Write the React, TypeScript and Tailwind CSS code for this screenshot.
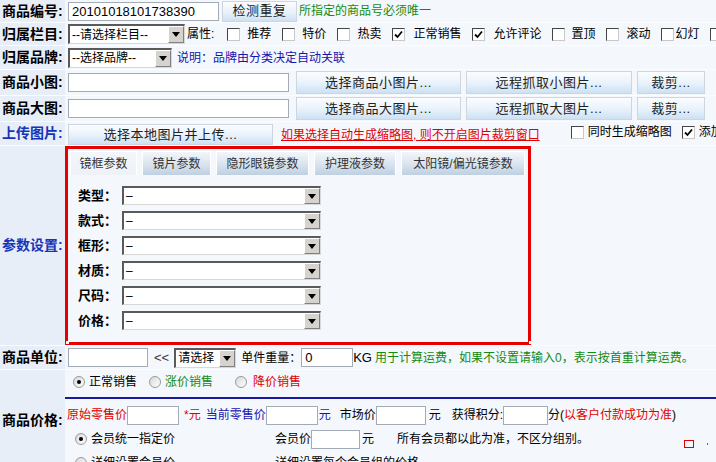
import React from "react";

const FONT = { fontFamily: '"Liberation Sans", "Noto Sans CJK SC", sans-serif' };

const Input = ({ w, value = "", h = 18 }: { w: number; value?: string; h?: number }) => (
  <div
    className="inline-flex items-center shrink-0 bg-white border border-[#a3acb6] px-[3px] text-[13px] text-black leading-none"
    style={{ width: w, height: h }}
  >
    {value}
  </div>
);

const Arrow = () => (
  <div className="flex items-center justify-center w-[16px] h-full bg-[#d6d3ce] border-t border-l border-t-white border-l-white border-b border-r border-b-[#808080] border-r-[#808080] shrink-0">
    <svg width="8" height="5" viewBox="0 0 8 5">
      <path d="M0 0H8L4 5Z" fill="#000" />
    </svg>
  </div>
);

const Select = ({ w, text, h = 19 }: { w: number; text: string; h?: number }) => (
  <div
    className="inline-flex items-stretch shrink-0 bg-white border-t-2 border-l-2 border-t-[#5a5a5a] border-l-[#5a5a5a] border-b border-r border-b-[#d8d8d8] border-r-[#d8d8d8]"
    style={{ width: w, height: h }}
  >
    <span className="flex-1 flex items-center pl-[2px] text-[12px] text-black leading-none">{text}</span>
    <Arrow />
  </div>
);

const Btn = ({ w, children, h = 22 }: { w: number; children: React.ReactNode; h?: number }) => (
  <div
    className="inline-flex items-center justify-center shrink-0 bg-gradient-to-b from-[#fbfdff] via-[#eaf3fb] to-[#cde1f3] border border-[#cbd6e0] text-[13px] text-[#222] tracking-[0.5px]"
    style={{ width: w, height: h }}
  >
    {children}
  </div>
);

const Check = ({ on = false }: { on?: boolean }) => (
  <span className="inline-flex items-center justify-center w-[13px] h-[13px] bg-white border-t border-l border-t-[#444] border-l-[#444] border-b border-r border-b-[#c8c8c8] border-r-[#c8c8c8] shrink-0">
    {on && (
      <svg width="9" height="9" viewBox="0 0 9 9">
        <path d="M1 4.5L3.5 7L8 1.5" stroke="#000" strokeWidth="1.8" fill="none" />
      </svg>
    )}
  </span>
);

const Radio = ({ on = false }: { on?: boolean }) => (
  <span className="inline-flex items-center justify-center w-[12px] h-[12px] rounded-full bg-gradient-to-br from-[#d8d8d8] to-white border border-[#9a9a9a] shrink-0">
    {on && <span className="w-[4px] h-[4px] rounded-full bg-black" />}
  </span>
);

const Label = ({ children, blue = false }: { children: React.ReactNode; blue?: boolean }) => (
  <div
    className={`w-[65px] shrink-0 bg-[#e7eef8] flex items-center pl-[2px] text-[14px] font-bold whitespace-nowrap ${
      blue ? "text-[#1535b8]" : "text-black"
    }`}
  >
    {children}
  </div>
);

const Cell = ({ children, className = "" }: { children: React.ReactNode; className?: string }) => (
  <div
    className={`flex-1 min-w-0 bg-[#f4f7fc] flex items-center whitespace-nowrap overflow-hidden text-[12px] text-black [&>*]:shrink-0 ${className}`}
  >
    {children}
  </div>
);

const attrs: { t: string; on: boolean; ml: string }[] = [
  { t: "推荐", on: false, ml: "ml-[7px]" },
  { t: "特价", on: false, ml: "ml-[7px]" },
  { t: "热卖", on: false, ml: "ml-[7px]" },
  { t: "正常销售", on: true, ml: "ml-[8px]" },
  { t: "允许评论", on: true, ml: "ml-[8px]" },
  { t: "置顶", on: false, ml: "ml-[6px]" },
  { t: "滚动", on: false, ml: "ml-[7px]" },
  { t: "幻灯", on: false, ml: "ml-[1px]" },
];

const tabs = [
  { t: "镜框参数", w: 67 },
  { t: "镜片参数", w: 69 },
  { t: "隐形眼镜参数", w: 93 },
  { t: "护理液参数", w: 82 },
  { t: "太阳镜/偏光镜参数", w: 124 },
];

const fields = ["类型", "款式", "框形", "材质", "尺码", "价格"];

export default function App() {
  return (
    <div className="w-[716px] h-[462px] overflow-hidden bg-[#fbfcfe] flex flex-col gap-px" style={FONT}>
      {/* 商品编号 */}
      <div className="flex h-[22px] shrink-0">
        <Label>商品编号:</Label>
        <Cell className="pl-[3px]">
          <Input w={151} h={19} value="20101018101738390" />
          <span className="w-[3px]" />
          <Btn w={75} h={21}>检测重复</Btn>
          <span className="ml-[2px] text-[#138a13]">所指定的商品号必须唯一</span>
        </Cell>
      </div>

      {/* 归属栏目 */}
      <div className="flex h-[22px] shrink-0">
        <Label>归属栏目:</Label>
        <Cell className="pl-[3px]">
          <Select w={117} text="--请选择栏目--" h={20} />
          <span className="ml-[2px]">属性:</span>
          <span className="w-[13px]" />
          {attrs.map((a) => (
            <React.Fragment key={a.t}>
              <Check on={a.on} />
              <span className={`${a.ml} mr-[11px]`}>{a.t}</span>
            </React.Fragment>
          ))}
          <Check />
        </Cell>
      </div>

      {/* 归属品牌 */}
      <div className="flex h-[23px] shrink-0">
        <Label>归属品牌:</Label>
        <Cell className="pl-[3px]">
          <Select w={104} text="--选择品牌--" h={20} />
          <span className="ml-[5px] text-[#1515b0]">说明：品牌由分类决定自动关联</span>
        </Cell>
      </div>

      {/* 商品小图 */}
      <div className="flex h-[25px] shrink-0">
        <Label>商品小图:</Label>
        <Cell className="pl-[3px]">
          <Input w={221} h={19} />
          <span className="w-[7px]" />
          <Btn w={165} h={23}>选择商品小图片...</Btn>
          <span className="w-[5px]" />
          <Btn w={166} h={23}>远程抓取小图片...</Btn>
          <span className="w-[5px]" />
          <Btn w={68} h={23}>裁剪...</Btn>
        </Cell>
      </div>

      {/* 商品大图 */}
      <div className="flex h-[25px] shrink-0">
        <Label>商品大图:</Label>
        <Cell className="pl-[3px]">
          <Input w={221} h={19} />
          <span className="w-[7px]" />
          <Btn w={165} h={23}>选择商品大图片...</Btn>
          <span className="w-[5px]" />
          <Btn w={166} h={23}>远程抓取大图片...</Btn>
          <span className="w-[5px]" />
          <Btn w={68} h={23}>裁剪...</Btn>
        </Cell>
      </div>

      {/* 上传图片 */}
      <div className="flex h-[23px] shrink-0">
        <Label blue>上传图片:</Label>
        <Cell className="pl-[3px] items-end">
          <Btn w={205} h={21}>选择本地图片并上传...</Btn>
          <span className="ml-[8px] mb-[1px] text-[#e00000] underline">如果选择自动生成缩略图, 则不开启图片裁剪窗口</span>
          <span className="w-[31px]" />
          <span className="mb-[4px] flex items-center">
            <Check />
            <span className="ml-[4px]">同时生成缩略图</span>
            <span className="w-[10px]" />
            <Check on />
            <span className="ml-[4px]">添加水印</span>
          </span>
        </Cell>
      </div>

      {/* 参数设置 */}
      <div className="flex h-[199px] shrink-0">
        <Label blue>参数设置:</Label>
        <Cell className="items-start relative">
          <div className="w-[466px] h-[199px] border-[3px] border-[#e60000] bg-[#f4f7fc]">
            <div className="flex gap-[5px] pl-[2px] pt-[2px]">
              {tabs.map((tab, i) => (
                <div
                  key={tab.t}
                  className={`h-[24px] flex items-center justify-center text-[12px] text-[#333] border-t border-l border-r border-white ${
                    i === 0
                      ? "bg-gradient-to-b from-[#f3f6fa] to-[#eef2f7]"
                      : "bg-gradient-to-b from-[#f2f6fa] via-[#dbe5ef] to-[#bfd0e1]"
                  }`}
                  style={{ width: tab.w }}
                >
                  {tab.t}
                </div>
              ))}
            </div>
            <div className="flex flex-col gap-[6px] pt-[11px] pl-[10px]">
              {fields.map((f) => (
                <div key={f} className="flex items-center h-[19px]">
                  <span className="w-[44px] text-[13px] font-bold text-black">{f}：</span>
                  <Select w={199} text="–" />
                </div>
              ))}
            </div>
          </div>
          <span className="absolute left-[1px] bottom-[1px] w-[3px] h-[3px] bg-white" />
          <span className="absolute left-[464px] bottom-[1px] w-[3px] h-[3px] bg-white" />
        </Cell>
      </div>

      {/* 商品单位 */}
      <div className="flex h-[23px] shrink-0">
        <Label>商品单位:</Label>
        <Cell className="pl-[3px]">
          <Input w={80} h={19} />
          <span className="ml-[6px] mr-[5px] text-[13px] text-[#333]">&lt;&lt;</span>
          <Select w={62} text="请选择" h={20} />
          <span className="ml-[5px]">单件重量：</span>
          <Input w={52} h={19} value="0" />
          <span className="text-[13px]">KG</span>
          <span className="ml-[3px] text-[#138a13]">用于计算运费，如果不设置请输入0，表示按首重计算运费。</span>
        </Cell>
      </div>

      {/* 商品价格 */}
      <div className="flex h-[100px] shrink-0">
        <Label>商品价格:</Label>
        <Cell className="flex-col items-stretch justify-start">
          <div className="flex items-center h-[24px] pl-[8px] [&>*]:shrink-0">
            <Radio on />
            <span className="ml-[4px]">正常销售</span>
            <span className="w-[12px]" />
            <Radio />
            <span className="ml-[4px] text-[#138a13]">涨价销售</span>
            <span className="w-[22px]" />
            <Radio />
            <span className="ml-[6px] text-[#e00000]">降价销售</span>
          </div>
          <div className="h-[2px] bg-[#1a1aa0] mt-[3px]" />
          <div className="flex items-center h-[24px] mt-[4px] [&>*]:shrink-0">
            <span className="ml-[2px] text-[#e00000]">原始零售价</span>
            <Input w={52} h={19} />
            <span className="ml-[5px] text-[#e00000]">*元</span>
            <span className="ml-[5px] text-[#1515b0]">当前零售价</span>
            <Input w={52} h={19} />
            <span className="ml-[1px] text-[#1515b0]">元</span>
            <span className="ml-[9px]">市场价</span>
            <Input w={50} h={19} />
            <span className="ml-[3px]">元</span>
            <span className="ml-[11px]">获得积分:</span>
            <Input w={45} h={19} />
            <span>分(</span>
            <span className="text-[#e00000]">以客户付款成功为准</span>
            <span>)</span>
          </div>
          <div className="flex items-center h-[24px] pl-[10px] relative [&>*]:shrink-0">
            <Radio on />
            <span className="ml-[4px] w-[184px]">会员统一指定价</span>
            <span>会员价</span>
            <Input w={49} h={19} />
            <span className="ml-[2px]">元</span>
            <span className="ml-[23px]">所有会员都以此为准，不区分组别。</span>
            <span className="absolute left-[619px] top-[13px] w-[10px] h-[8px] border border-[#e00000]" />
            <span className="absolute left-[642px] top-[16px] w-[1px] h-[2px] bg-[#666]" />
          </div>
          <div className="flex items-center h-[24px] pl-[10px] [&>*]:shrink-0">
            <Radio />
            <span className="ml-[4px] w-[184px]">详细设置会员价</span>
            <span>详细设置每个会员组的价格</span>
          </div>
        </Cell>
      </div>
    </div>
  );
}
